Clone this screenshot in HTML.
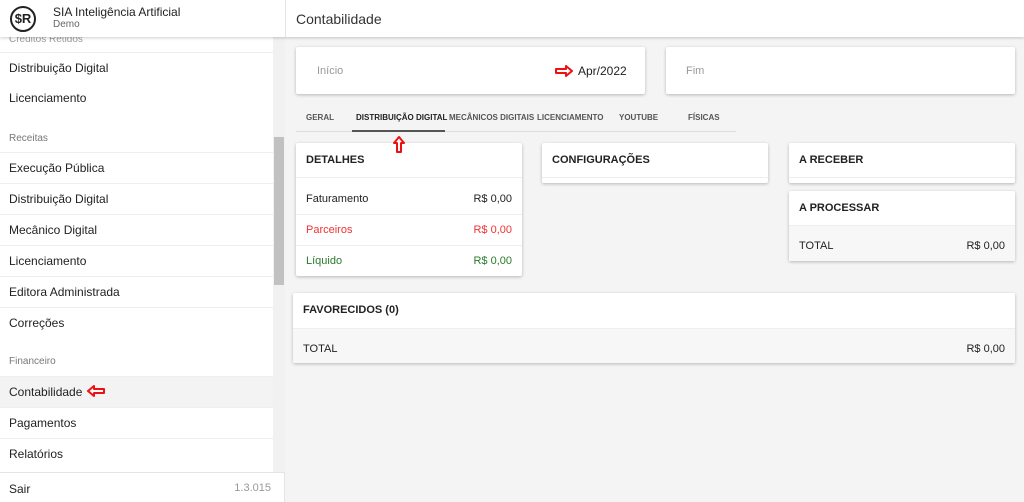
<!DOCTYPE html><html><head><style>
*{box-sizing:border-box;margin:0;padding:0}
body{width:1024px;height:502px;overflow:hidden;font-family:"Liberation Sans",sans-serif;background:#f4f4f4;position:relative;color:#222}
.side{position:absolute;left:0;top:0;width:285px;height:502px;background:#fff;border-right:1px solid #e4e4e4}
.hdr{position:absolute;left:0;top:0;width:1024px;height:37px;background:#fff;box-shadow:0 1px 3px rgba(0,0,0,.2);z-index:2}
.it{position:absolute;left:0;width:273px;font-size:12px;color:#222;padding-left:9px;border-top:1px solid #eee;height:31px;line-height:30px}
.sec{position:absolute;left:9px;font-size:10px;color:#777}
.card{position:absolute;background:#fff;box-shadow:0 1px 3px rgba(0,0,0,.25);border-radius:2px}
.t{font-size:11px;font-weight:bold;color:#222;position:absolute}
.row{position:absolute;left:0;right:0;font-size:11px;padding:0 10px;display:flex;justify-content:space-between;border-top:1px solid #eee}
.tab{position:absolute;top:113px;font-size:8px;color:#555;font-weight:bold}
svg{position:absolute;z-index:5}
</style></head><body>
<div class="hdr">
<div style="position:absolute;left:10px;top:6px;width:26px;height:26px;border-radius:50%;border:2px solid #222;font-weight:bold;font-size:13px;text-align:center;line-height:22px">$R</div>
<div style="position:absolute;left:53px;top:5px;font-size:12px">SIA Inteligência Artificial</div>
<div style="position:absolute;left:53px;top:19px;font-size:10px;color:#666">Demo</div>
<div style="position:absolute;left:285px;top:0;height:37px;border-left:1px solid #e4e4e4"></div>
<div style="position:absolute;left:296px;top:11px;font-size:14px;color:#333">Contabilidade</div>
</div>
<div class="side">
<div class="sec" style="top:34px;color:#999">Creditos Retidos</div>
<div class="it" style="top:52px">Distribuição Digital</div>
<div class="it" style="top:83px;border:none">Licenciamento</div>
<div class="sec" style="top:133px">Receitas</div>
<div class="it" style="top:152px">Execução Pública</div>
<div class="it" style="top:183px">Distribuição Digital</div>
<div class="it" style="top:214px">Mecânico Digital</div>
<div class="it" style="top:245px">Licenciamento</div>
<div class="it" style="top:276px">Editora Administrada</div>
<div class="it" style="top:307px">Correções</div>
<div class="sec" style="top:356px">Financeiro</div>
<div class="it" style="top:376px;background:#f3f3f3">Contabilidade</div>
<svg style="left:87px;top:385px" width="18" height="12" viewBox="0 0 18 12"><path d="M1 6 L7 1 L7 4 L17 4 L17 8 L7 8 L7 11 Z" fill="#fff" stroke="#e11" stroke-width="2" stroke-linejoin="round"/></svg>
<div class="it" style="top:407px">Pagamentos</div>
<div class="it" style="top:438px">Relatórios</div>
<div style="position:absolute;left:273px;top:37px;width:12px;height:435px;background:#f1f1f1"></div>
<div style="position:absolute;left:274px;top:137px;width:10px;height:148px;background:#c1c1c1"></div>
<div style="position:absolute;left:0;top:472px;width:285px;height:30px;border-top:1px solid #e4e4e4;font-size:12px;padding:9px"><span>Sair</span><span style="position:absolute;right:14px;color:#999;font-size:11px">1.3.015</span></div>
</div>
<div class="card" style="left:296px;top:47px;width:349px;height:47px"><span style="position:absolute;left:21px;top:18px;font-size:11px;color:#999">Início</span>
<svg style="left:259px;top:18px" width="18" height="12" viewBox="0 0 18 12"><path d="M17 6 L11 1 L11 4 L1 4 L1 8 L11 8 L11 11 Z" fill="#fff" stroke="#e11" stroke-width="2" stroke-linejoin="round"/></svg>
<span style="position:absolute;left:282px;top:17px;font-size:12px">Apr/2022</span></div>
<div class="card" style="left:666px;top:47px;width:349px;height:47px"><span style="position:absolute;left:20px;top:18px;font-size:11px;color:#999">Fim</span></div>
<div style="position:absolute;left:296px;top:131px;width:440px;border-top:1px solid #ddd"></div>
<div style="position:absolute;left:352px;top:130px;width:93px;height:2px;background:#555"></div>
<span class="tab" style="left:306px">GERAL</span>
<span class="tab" style="left:356px;color:#222">DISTRIBUIÇÃO DIGITAL</span>
<span class="tab" style="left:449px">MECÂNICOS DIGITAIS</span>
<span class="tab" style="left:537px">LICENCIAMENTO</span>
<span class="tab" style="left:619px">YOUTUBE</span>
<span class="tab" style="left:688px">FÍSICAS</span>
<div class="card" style="left:296px;top:143px;width:226px;height:133px"><span class="t" style="left:10px;top:11px">DETALHES</span>
<div class="row" style="top:34px;height:31px;line-height:42px"><span>Faturamento</span><span>R$ 0,00</span></div>
<div class="row" style="top:71px;height:31px;line-height:30px;color:#e33"><span>Parceiros</span><span>R$ 0,00</span></div>
<div class="row" style="top:102px;height:31px;line-height:30px;color:#2a7a2a"><span>Líquido</span><span>R$ 0,00</span></div></div>
<svg style="left:393px;top:136px" width="12" height="17" viewBox="0 0 12 17"><path d="M6 1 L11 7 L8 7 L8 16 L4 16 L4 7 L1 7 Z" fill="#fff" stroke="#e11" stroke-width="2" stroke-linejoin="round"/></svg>
<div class="card" style="left:542px;top:143px;width:226px;height:40px"><span class="t" style="left:10px;top:11px">CONFIGURAÇÕES</span><div class="row" style="top:34px"></div></div>
<div class="card" style="left:789px;top:143px;width:226px;height:40px"><span class="t" style="left:10px;top:11px">A RECEBER</span><div class="row" style="top:34px"></div></div>
<div class="card" style="left:789px;top:191px;width:226px;height:70px"><span class="t" style="left:10px;top:11px">A PROCESSAR</span><div class="row" style="top:34px;height:36px;line-height:40px;background:#f7f7f7"><span>TOTAL</span><span>R$ 0,00</span></div></div>
<div class="card" style="left:293px;top:293px;width:722px;height:70px"><span class="t" style="left:10px;top:11px">FAVORECIDOS (0)</span><div class="row" style="top:35px;height:35px;line-height:41px;background:#f7f7f7"><span>TOTAL</span><span>R$ 0,00</span></div></div>
</body></html>
